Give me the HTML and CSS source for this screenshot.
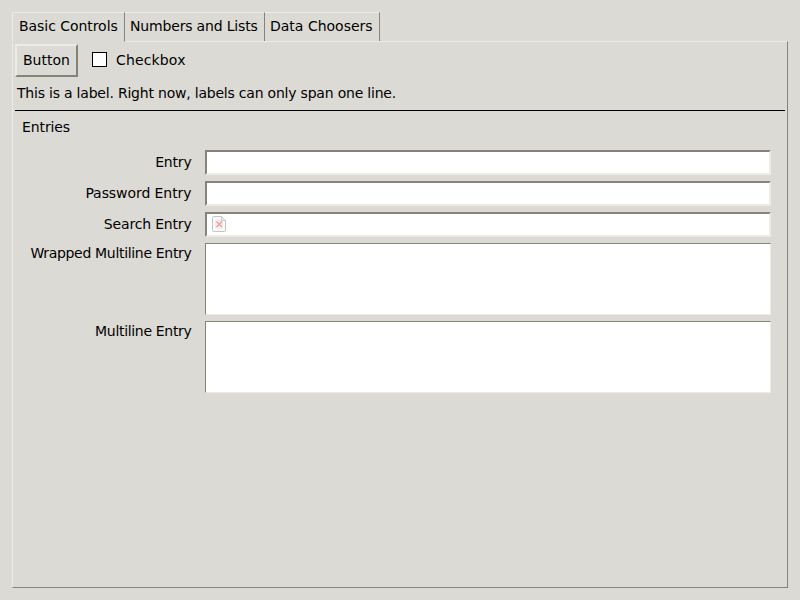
FILE: index.html
```html
<!DOCTYPE html>
<html lang="en">
<head>
<meta charset="utf-8">
<title>Control Gallery</title>
<link rel="stylesheet" href="styles.css">
</head>
<body>
<div class="window">
  <nav class="tabs">
    <div class="tab active">Basic Controls</div>
    <div class="tab second">Numbers and Lists</div>
    <div class="tab third">Data Choosers</div>
  </nav>
  <main class="panel">
    <div class="row">
      <button class="button">Button</button>
      <label class="check"><span class="box"></span><span class="check-text">Checkbox</span></label>
    </div>
    <p class="label">This is a label. Right now, labels can only span one line.</p>
    <div class="separator"></div>
    <section class="group">
      <h2 class="title">Entries</h2>
      <div class="form">
        <div class="name short">Entry</div><div class="entry"></div>
        <div class="name password">Password Entry</div><div class="entry"></div>
        <div class="name short">Search Entry</div>
        <div class="entry">
          <svg class="icon" width="16" height="16" viewBox="0 0 16 16" fill="none">
            <path d="M2.500 .5h8l4 4v10a1 1 0 0 1-1 1h-11a1 1 0 0 1-1-1v-13a1 1 0 0 1 1-1z" fill="#fafafa" stroke="#c4c4c4"/>
            <path d="M10.500 1v3.500h4" fill="#eee" stroke="#cacaca"/>
            <path d="M4.500 4.500h5.500v1h1.500v6.500h-7z" fill="#f8f4f4" stroke="#ececec"/>
            <path d="M5.500 5.500l5.500 5.500M11 5.500l-5.500 5.500" stroke="#ff9090" stroke-width="1.200"/>
          </svg>
        </div>
        <div class="name top">Wrapped Multiline Entry</div><div class="multi"></div>
        <div class="name top">Multiline Entry</div><div class="multi"></div>
      </div>
    </section>
  </main>
</div>
</body>
</html>
```
FILE: styles.css
```css
* { box-sizing: border-box; }
body {
  margin: 0;
  background: #dcdad5;
  color: #000;
  font: 14px/17px "DejaVu Sans", sans-serif;
}
.window {
  display: flex;
  flex-direction: column;
  width: 800px;
  height: 600px;
  padding: 12px;
}
.tabs { display: flex; height: 29px; }
.tab {
  width: 140px;
  padding: 5px 0 0 5px;
  border-top: 1px solid #eeebe7;
  border-right: 1px solid #868378;
  white-space: nowrap;
}
.tab.active {
  width: 113px;
  height: 30px;
  padding-left: 6px;
  border-left: 1px solid #eeebe7;
  border-bottom: 1px solid #dcdad5;
  background: #dcdad5;
  letter-spacing: -0.050px;
  z-index: 1;
}
.tab.second { letter-spacing: -0.170px; }
.tab.third { width: 115px; }
.panel {
  flex: 1;
  padding: 2px;
  border: 1px solid;
  border-color: #eeebe7 #868378 #868378 #eeebe7;
}
.row { display: flex; height: 33px; }
.button {
  width: 63px;
  height: 33px;
  padding: 0 0 0 6px;
  border: 2px solid;
  border-color: #eeebe7 #868378 #868378 #eeebe7;
  background: #dcdad5;
  color: #000;
  font: inherit;
  text-align: left;
}
.check { display: flex; align-items: center; margin-left: 14px; gap: 9px; }
.check-text { letter-spacing: 0.150px; }
.box { width: 15px; height: 15px; margin-top: -2px; border: 1px solid #000; background: #fff; }
.label {
  height: 33px;
  margin: 0;
  padding: 8px 0 0 2px;
  letter-spacing: -0.210px;
  white-space: nowrap;
}
.separator { height: 1px; background: #000; }
.group { padding: 8px 14px 0 7px; }
.title { margin: 0; font: inherit; height: 31px; letter-spacing: -0.100px; }
.form {
  display: grid;
  grid-template-columns: 170px 566px;
  grid-template-rows: 25px 25px 25px 72px 72px;
  column-gap: 13px;
  row-gap: 6px;
  justify-content: end;
}
.name { padding: 4px 0.500px 0 0; text-align: right; white-space: nowrap; }
.name.short { letter-spacing: -0.180px; }
.name.password { letter-spacing: -0.070px; }
.name.top { padding-top: 2px; letter-spacing: -0.320px; }
.entry {
  padding: 2px 0 0 4px;
  border: 2px solid;
  border-color: #868378 #eeebe7 #eeebe7 #868378;
  background: #fff;
}
.icon { display: block; }
.multi {
  border: 1px solid;
  border-color: #868378 #eeebe7 #eeebe7 #868378;
  background: #fff;
}
```
